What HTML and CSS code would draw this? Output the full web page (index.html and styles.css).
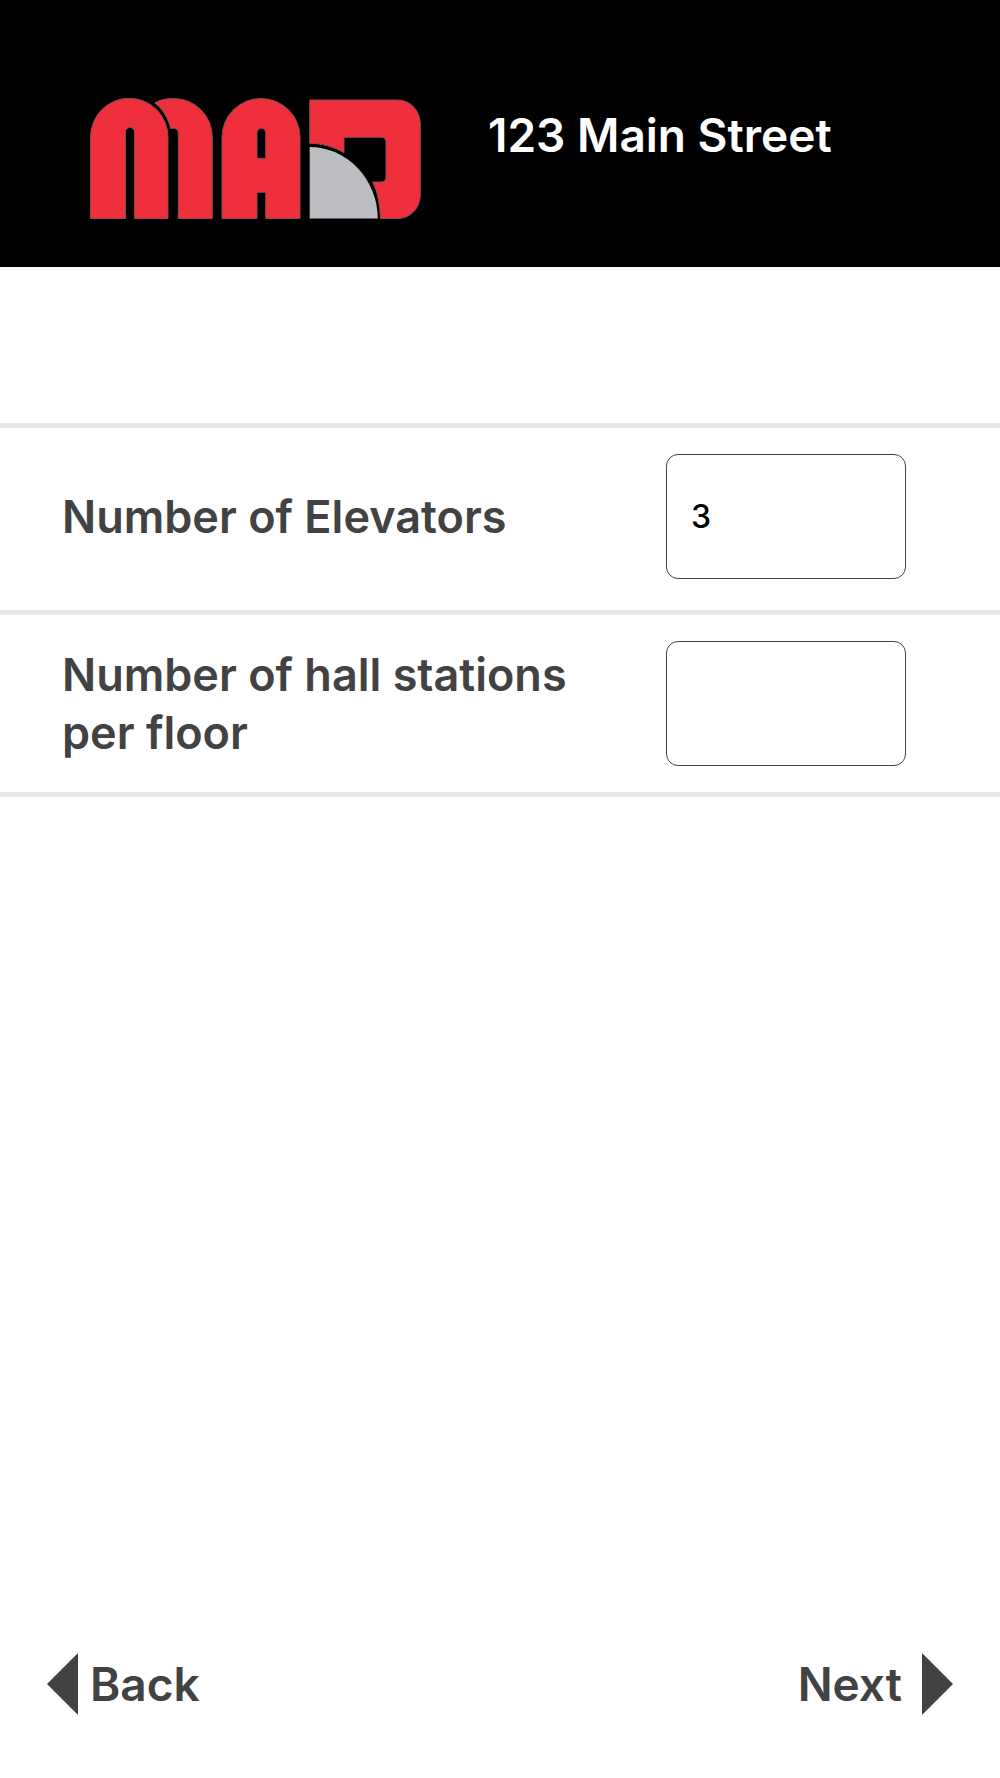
FILE: index.html
```
<!DOCTYPE html>
<html lang="en">
<head>
    <meta charset="UTF-8">
    <meta name="viewport" content="width=device-width, initial-scale=1.0">
    <title>123 Main Street</title>
    <link rel="stylesheet" href="styles.css">
</head>
<body>

<header class="app-header">
    <svg class="logo" viewBox="0 0 331 121" role="img" aria-label="MAD">
        <g class="logo-red">
            <path d="M.5 120.5V39a38.7 38.7 0 0 1 77.5 0v81.5H44.5V34a4.5 4.5 0 0 0-9 0v86.5Z"/>
            <path d="M64.7 5C70 1.5 77 .5 84 .5A38.5 38.5 0 0 1 122.3 39V120.5H88.3V35C88 31 85 29.5 80.7 30.7C78 20 72.5 10.5 64.7 5Z"/>
            <path fill-rule="evenodd" d="M132 120.5V39a39 38.5 0 0 1 78 0v81.5H175.7V94.3H167v26.2ZM167 60.3h8.7V35a4.35 4.7 0 0 0-8.7 0Z"/>
            <path d="M219.7 2H308a22.3 24 0 0 1 22.3 24V97a22.3 23.5 0 0 1-22.3 23.5H290.3C290 107 288 95 282.7 84H291q5 0 5-5V44.3q0-5-5-5H254V54.7C243 48.5 232 45.5 219.7 45.3Z"/>
        </g>
        <path class="logo-gray" d="M219.7 120.5V49C257 49 287.5 81 287.8 120.5Z"/>
    </svg>
    <h1 class="app-title">123 Main Street</h1>
</header>

<form class="building-form">
    <div class="form-rows">
        <div class="form-row">
            <label for="elevators">Number of Elevators</label>
            <input type="text" id="elevators" name="elevators" inputmode="numeric" value="3">
        </div>
        <div class="form-row">
            <label for="stations">Number of hall stations per floor</label>
            <input type="text" id="stations" name="stations" inputmode="numeric">
        </div>
    </div>

    <div class="nav-bar">
        <button type="button" class="nav-btn">
            <svg class="arrow" viewBox="0 0 31 62" aria-hidden="true"><path d="M31 0v62L0 31Z"/></svg>
            Back
        </button>
        <button type="submit" class="nav-btn next">
            Next
            <svg class="arrow" viewBox="0 0 31 62" aria-hidden="true"><path d="M0 0v62l31-31Z"/></svg>
        </button>
    </div>
</form>

</body>
</html>
```
FILE: styles.css
```
:root {
    --text-color: #424242;
    --line-color: #e6e6e6;
    --logo-red: #ef303c;
    --logo-gray: #bcbdc1;
}

* {
    box-sizing: border-box;
}

body {
    margin: 0;
    min-height: 100vh;
    display: flex;
    flex-direction: column;
    font-family: Inter, "Liberation Sans", sans-serif;
    font-size: 46px;
    font-weight: 600;
    line-height: 58px;
    color: var(--text-color);
    background-color: #fff;
}

/* Header */
.app-header {
    display: flex;
    align-items: flex-start;
    gap: 67px;
    padding: 98px 48px 48px 90px;
    background-color: #000;
}

.logo {
    flex: none;
    width: 331px;
    height: 121px;
}

.logo-red {
    fill: var(--logo-red);
    stroke: #8a4a4e;
    stroke-width: 1;
}

.logo-gray {
    fill: var(--logo-gray);
}

.app-title {
    margin: 8px 0 0;
    font-size: inherit;
    font-weight: inherit;
    color: #fff;
}

/* Form */
.building-form {
    flex: 1;
    display: flex;
    flex-direction: column;
    justify-content: space-between;
    padding-top: 156px;
}

.form-rows {
    border-bottom: 5px solid var(--line-color);
}

.form-row {
    display: flex;
    align-items: center;
    justify-content: space-between;
    gap: 48px;
    padding: 26px 94px 26px 62px;
    border-top: 5px solid var(--line-color);
}

.form-row:first-child {
    padding-bottom: 31px;
}

.form-row label {
    max-width: 540px;
    font-size: 45px;
}

.form-row input {
    flex: none;
    width: 240px;
    height: 125px;
    padding: 0 24px;
    border: 1px solid #424242;
    border-radius: 12px;
    background: #fff;
    font-family: inherit;
    font-size: 32px;
    font-weight: 500;
    color: #000;
}

/* Back / Next */
.nav-bar {
    display: flex;
    justify-content: space-between;
    padding: 48px 47px 63px;
}

.nav-btn {
    display: flex;
    align-items: center;
    gap: 12px;
    padding: 0;
    border: none;
    background: none;
    font: inherit;
    color: inherit;
    cursor: pointer;
}

.nav-btn.next {
    gap: 20px;
}

.arrow {
    width: 31px;
    height: 62px;
    fill: currentColor;
}
```
